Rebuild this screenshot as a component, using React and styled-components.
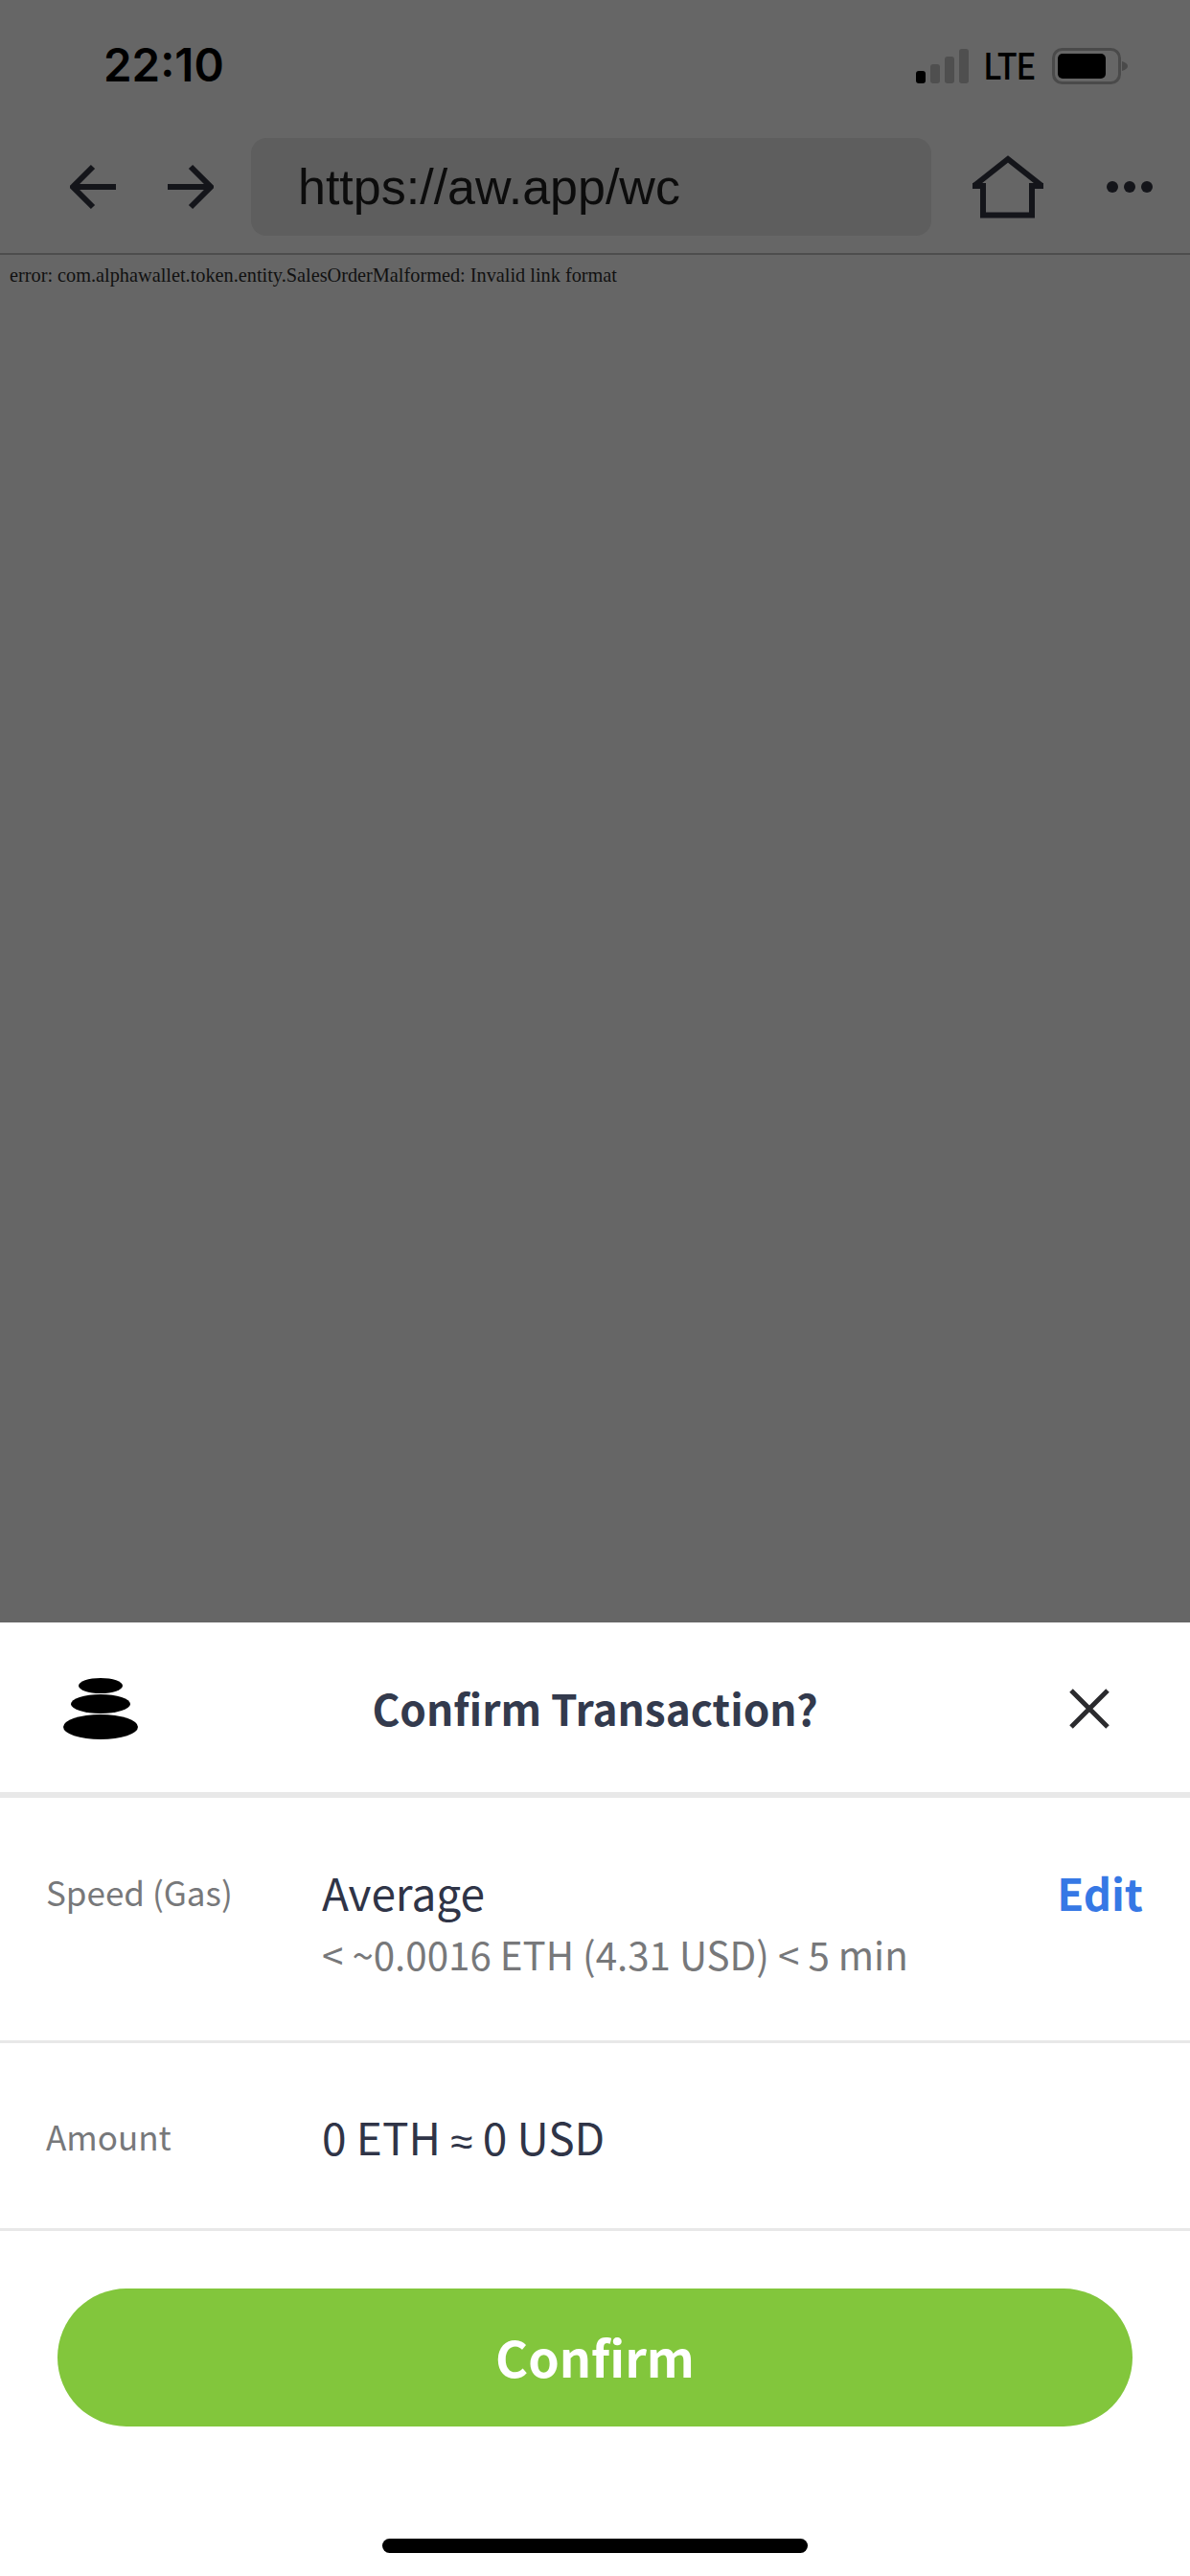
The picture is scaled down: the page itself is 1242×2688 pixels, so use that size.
import React from 'react';
import styled, { createGlobalStyle } from 'styled-components';

const GlobalStyle = createGlobalStyle`
    html, body { margin: 0; padding: 0; background: #fff; }
    * { box-sizing: border-box; }
`;

const SHEET_FONT = `"Noto Sans CJK SC", "Noto Sans", sans-serif`;

const App = () => (
    <Screen>
        <GlobalStyle />
        <Browser>
            <StatusBar>
                <Time>22:10</Time>
                <StatusRight>
                    <svg width="55" height="36" viewBox="0 0 55 36">
                        <rect x="0" y="23" width="10" height="13" rx="3" fill="#000" />
                        <rect x="15" y="16" width="10" height="20" rx="3" fill="#4f4f4f" />
                        <rect x="30" y="8" width="10" height="28" rx="3" fill="#4f4f4f" />
                        <rect x="45" y="0" width="10" height="36" rx="3" fill="#4f4f4f" />
                    </svg>
                    <Lte>LTE</Lte>
                    <svg width="80" height="38" viewBox="0 0 80 38">
                        <rect x="1.5" y="1.5" width="69" height="35" rx="9" fill="none" stroke="#4a4a4a" strokeWidth="3" />
                        <rect x="6" y="6" width="50" height="26" rx="5" fill="#000" />
                        <path d="M73 14 Q79 16 79 19 Q79 22 73 24 Z" fill="#4a4a4a" />
                    </svg>
                </StatusRight>
            </StatusBar>
            <Toolbar>
                <NavIcon width="50" height="48" viewBox="0 0 50 48">
                    <path d="M48 24H4M24 3 3 24l21 21" />
                </NavIcon>
                <NavIcon width="50" height="48" viewBox="0 0 50 48">
                    <path d="M2 24h44M26 3l21 21-21 21" />
                </NavIcon>
                <UrlBox>https://aw.app/wc</UrlBox>
                <svg width="74" height="66" viewBox="0 0 74 66" fill="none" stroke="#14151a" strokeWidth="6">
                    <path d="M11 29V62.500H62V29M1 32.500 37 4l36 28.500M0 32h11M62 32h12" />
                </svg>
                <MoreDots>
                    <Dot />
                    <Dot />
                    <Dot />
                </MoreDots>
            </Toolbar>
            <ErrorText>error: com.alphawallet.token.entity.SalesOrderMalformed: Invalid link format</ErrorText>
        </Browser>

        <Sheet>
            <SheetHeader>
                <LogoIcon width="80" height="66" viewBox="0 0 80 66">
                    <ellipse cx="40" cy="9" rx="23" ry="8" />
                    <ellipse cx="40" cy="28" rx="31" ry="10" />
                    <ellipse cx="40" cy="52" rx="39" ry="13" />
                </LogoIcon>
                <SheetTitle>Confirm Transaction?</SheetTitle>
                <CloseIcon width="42" height="42" viewBox="0 0 42 42">
                    <path d="M2 2 40 40M40 2 2 40" />
                </CloseIcon>
            </SheetHeader>

            <Row $height={256} $top={68}>
                <RowLabel>Speed (Gas)</RowLabel>
                <RowBody>
                    <RowValue>Average</RowValue>
                    <RowSub>&lt; ~0.0016 ETH (4.31 USD) &lt; 5 min</RowSub>
                </RowBody>
                <EditLink>Edit</EditLink>
            </Row>
            <Row $height={196} $top={67}>
                <RowLabel>Amount</RowLabel>
                <RowBody>
                    <RowValue>0 ETH <Approx>≈</Approx> 0 USD</RowValue>
                </RowBody>
            </Row>

            <ButtonWrap>
                <ConfirmButton>Confirm</ConfirmButton>
            </ButtonWrap>
            <HomeBar />
        </Sheet>
    </Screen>
);

export default App;

const Screen = styled.div`
    width: 1242px;
    height: 2688px;
    display: flex;
    flex-direction: column;
    overflow: hidden;
`;

const Browser = styled.div`
    height: 1693px;
    background: #666666;
`;

const StatusBar = styled.div`
    height: 144px;
    display: flex;
    justify-content: space-between;
    align-items: flex-start;
    padding: 42px 64px 0 108px;
`;

const Time = styled.div`
    font-family: Inter, "Liberation Sans", sans-serif;
    font-size: 47.5px;
    line-height: 52px;
    font-weight: 600;
    color: #000;
`;

const StatusRight = styled.div`
    display: flex;
    align-items: center;
    padding-top: 7px;
    margin-left: auto;

    svg:first-child { margin-right: 16px; }
`;

const Lte = styled.span`
    display: inline-block;
    width: 54px;
    margin: 2px 17px 0 0;
    font-family: Roboto, "Liberation Sans", sans-serif;
    font-size: 38px;
    line-height: 38px;
    font-weight: 500;
    color: #000;
    transform: scaleX(0.88);
    transform-origin: left center;
`;

const Toolbar = styled.div`
    height: 102px;
    display: flex;
    align-items: center;
    padding-left: 73px;
`;

const NavIcon = styled.svg`
    fill: none;
    stroke: #14151a;
    stroke-width: 6;
    margin-right: 50px;

    & + & { margin-right: 39px; }
`;

const UrlBox = styled.div`
    width: 710px;
    height: 102px;
    background: #5e5e5e;
    border-radius: 16px;
    display: flex;
    align-items: center;
    padding-left: 49px;
    margin-right: 43px;
    font-family: "Liberation Sans", Arial, sans-serif;
    font-size: 52px;
    color: #0c0c0c;
`;

const MoreDots = styled.div`
    display: flex;
    gap: 6px;
    margin-left: 66px;
`;

const Dot = styled.span`
    width: 12px;
    height: 12px;
    border-radius: 50%;
    background: #14151a;
`;

const ErrorText = styled.div`
    margin-top: 18px;
    border-top: 2px solid #4d4d4d;
    padding: 9px 0 0 10px;
    font-family: "Liberation Serif", "Times New Roman", serif;
    font-size: 20.3px;
    line-height: 24px;
    color: #111;
`;

const Sheet = styled.div`
    flex: 1;
    background: #fff;
    display: flex;
    flex-direction: column;
    font-family: ${SHEET_FONT};
`;

const SheetHeader = styled.div`
    height: 183px;
    border-bottom: 6px solid #e8e8e8;
    display: grid;
    grid-template-columns: 1fr auto 1fr;
    align-items: center;
    padding: 0 84px;
    flex-shrink: 0;
`;

const LogoIcon = styled.svg`
    justify-self: start;
    margin: 3px 0 0 -19px;
`;

const CloseIcon = styled.svg`
    justify-self: end;
    fill: none;
    stroke: #2b2b2e;
    stroke-width: 5;
    margin-top: 2px;
`;

const SheetTitle = styled.div`
    font-size: 44.2px;
    font-weight: 600;
    color: #333a4d;
`;

const Row = styled.div`
    height: ${(p) => p.$height}px;
    flex-shrink: 0;
    border-bottom: 3px solid #e8e8e8;
    display: flex;
    align-items: flex-start;
    padding: ${(p) => p.$top}px 49px 0 48px;
`;

const RowLabel = styled.div`
    width: 288px;
    font-size: 35px;
    line-height: 60px;
    color: #77787a;
`;

const RowBody = styled.div`
    flex: 1;
`;

const RowValue = styled.div`
    font-size: 46px;
    line-height: 60px;
    color: #2f3447;
`;

const Approx = styled.span`
    font-family: "Liberation Sans", sans-serif;
    font-size: 42px;
`;

const RowSub = styled.div`
    font-size: 40.3px;
    line-height: 60px;
    margin-top: 5px;
    color: #77787a;
`;

const EditLink = styled.div`
    font-size: 45.5px;
    line-height: 60px;
    font-weight: 700;
    color: #3678e5;
`;

const ButtonWrap = styled.div`
    padding: 60px 60px 0;
`;

const ConfirmButton = styled.button`
    display: block;
    width: 100%;
    height: 144px;
    padding: 0 0 4px;
    border: none;
    border-radius: 72px;
    background: #82c63c;
    color: #fff;
    font-family: ${SHEET_FONT};
    font-size: 52px;
    font-weight: 600;
`;

const HomeBar = styled.div`
    width: 444px;
    height: 15px;
    border-radius: 8px;
    background: #000;
    margin: 117px auto 0;
`;
